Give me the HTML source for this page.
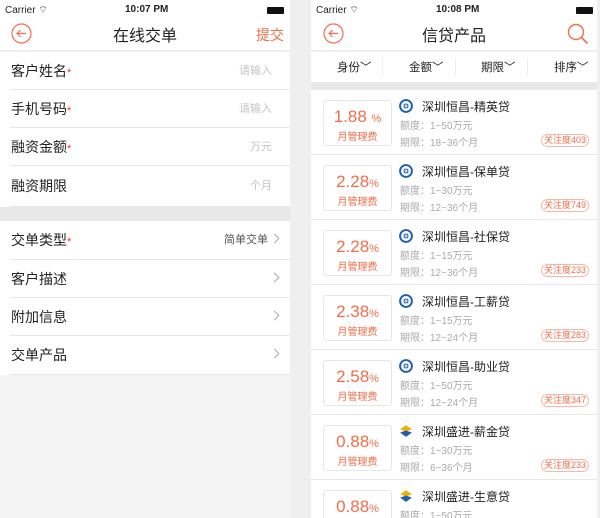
<!DOCTYPE html>
<html><head><meta charset="utf-8"><style>
*{margin:0;padding:0;box-sizing:border-box}
body{width:600px;height:518px;background:#efefef;font-family:"Liberation Sans","Noto Sans CJK SC",sans-serif;position:relative;overflow:hidden}
.s{position:absolute;top:0;height:518px;overflow:hidden}
#L{left:0;width:290px;background:#f4f4f4}
#R{left:311px;width:286px;background:#f4f4f4}
.sb{height:20px;font-size:10px;color:#222;position:relative}
.nav{height:30px;position:relative;background:#fff}
.top{background:#fff}
.title{position:absolute;left:0;right:0;top:2px;text-align:center;font-size:16px;color:#222}
.row{height:38px;background:#fff;position:relative;font-size:14px;color:#222;padding-left:11px;line-height:38px}
.row:after{content:"";position:absolute;left:10px;right:0;bottom:0;border-bottom:1px solid #e6e6e6}
.row .r{position:absolute;right:18px;top:0;font-size:11px;color:#c4c4c4}
.star{color:#e33;font-size:11px}
.chev{position:absolute;right:12px;top:14px;width:7px;height:7px;border-right:1px solid #aaa;border-top:1px solid #aaa;transform:rotate(45deg)}
.card{height:65px;background:#fff;position:relative;border-bottom:1px solid #e8e8e8}
.box{position:absolute;left:12px;top:10px;width:69px;height:46px;border:1px solid #e6e6e6;border-radius:3px;text-align:center;color:#f36d4a}
.box b{font-weight:normal;font-size:17px;display:block;margin-top:6px}
.box b span{font-size:11px}
.box i{font-style:normal;font-size:10px;display:block;margin-top:1px}
.nm{position:absolute;left:111px;top:8px;font-size:12px;color:#222}
.lg{position:absolute;left:88px;top:9px;width:14px;height:14px}
.l1,.l2{position:absolute;left:89px;font-size:10px;color:#aaa}
.l1{top:27px}.l2{top:44px}
.tag{position:absolute;right:8px;top:44px;font-size:9px;color:#f36d4a;border:1px solid #f5b8a6;border-radius:7px;padding:0 2px;line-height:11px}
</style></head><body>
<div class="s" id="L">
<div class="top">
<div class="sb"><span style="position:absolute;left:5px;top:4px">Carrier ︎⌔</span><span style="position:absolute;left:125px;top:4px;font-weight:bold">10:07 PM</span><span style="position:absolute;right:6px;top:7px;width:17px;height:7px;background:#111;border-radius:1px"></span></div>
<div class="nav"><svg style="position:absolute;left:11px;top:3px" width="21" height="21" viewBox="0 0 21 21"><circle cx="10.5" cy="10.5" r="9.5" fill="none" stroke="#f36d4a" stroke-width="1.2"/><path d="M15 10.5H6M9.5 7L6 10.5L9.5 14" fill="none" stroke="#f36d4a" stroke-width="1.2"/></svg><div class="title">在线交单</div><span style="position:absolute;right:6px;top:5px;font-size:14px;color:#f36d4a">提交</span></div>
</div>
<div style="height:2px;background:#eee"></div>
<div class="row">客户姓名<span class="star">*</span><span class="r">请输入</span></div>
<div class="row">手机号码<span class="star">*</span><span class="r">请输入</span></div>
<div class="row">融资金额<span class="star">*</span><span class="r">万元</span></div>
<div class="row" style="height:41px;line-height:40px">融资期限<span class="r">个月</span></div>
<div style="height:14px;background:#e8e8e8"></div>
<div class="row" style="height:39px;line-height:39px">交单类型<span class="star">*</span><span class="r" style="color:#555;right:22px">简单交单</span><i class="chev"></i></div>
<div class="row">客户描述<i class="chev"></i></div>
<div class="row">附加信息<i class="chev"></i></div>
<div class="row" style="height:39px">交单产品<i class="chev"></i></div>
</div>
<div class="s" id="R">
<div class="top">
<div class="sb"><span style="position:absolute;left:5px;top:4px">Carrier ︎⌔</span><span style="position:absolute;left:125px;top:4px;font-weight:bold">10:08 PM</span><span style="position:absolute;right:4px;top:7px;width:17px;height:7px;background:#111;border-radius:1px"></span></div>
<div class="nav"><svg style="position:absolute;left:12px;top:3px" width="21" height="21" viewBox="0 0 21 21"><circle cx="10.5" cy="10.5" r="9.5" fill="none" stroke="#f36d4a" stroke-width="1.2"/><path d="M15 10.5H6M9.5 7L6 10.5L9.5 14" fill="none" stroke="#f36d4a" stroke-width="1.2"/></svg><div class="title">信贷产品</div><svg style="position:absolute;right:8px;top:3px" width="22" height="22" viewBox="0 0 22 22"><circle cx="9" cy="9" r="7.5" fill="none" stroke="#f36d4a" stroke-width="1.4"/><path d="M14.5 14.5L20.5 20.5" stroke="#f36d4a" stroke-width="1.6"/></svg></div>
</div>
<div style="height:2px;background:#eee"></div>
<div style="height:30px;background:#fff;position:relative;font-size:11.5px;color:#222">
<span style="position:absolute;left:26px;top:7px">身份﹀</span><span style="position:absolute;left:98px;top:7px">金额﹀</span><span style="position:absolute;left:170px;top:7px">期限﹀</span><span style="position:absolute;left:243px;top:7px">排序﹀</span>
<i style="position:absolute;left:71px;top:6px;height:18px;border-left:1px solid #eee"></i><i style="position:absolute;left:144px;top:6px;height:18px;border-left:1px solid #eee"></i><i style="position:absolute;left:216px;top:6px;height:18px;border-left:1px solid #eee"></i>
</div>
<div style="height:8px;background:#e8e8e8"></div>
<div class="card"><div class="box"><b>1.88 <span>%</span></b><i>月管理费</i></div><svg class="lg" viewBox="0 0 13 13"><circle cx="6.5" cy="6.5" r="5.5" fill="none" stroke="#1f5fae" stroke-width="1.8"/><circle cx="6.5" cy="6.5" r="2.5" fill="#1f5fae"/><path d="M6.5 3v7M3 6.5h7" stroke="#fff" stroke-width=".8"/></svg><div class="nm">深圳恒昌-精英贷</div><div class="l1">额度：1~50万元</div><div class="l2">期限：18~36个月</div><span class="tag">关注度403</span></div>
<div class="card"><div class="box"><b>2.28<span>%</span></b><i>月管理费</i></div><svg class="lg" viewBox="0 0 13 13"><circle cx="6.5" cy="6.5" r="5.5" fill="none" stroke="#1f5fae" stroke-width="1.8"/><circle cx="6.5" cy="6.5" r="2.5" fill="#1f5fae"/><path d="M6.5 3v7M3 6.5h7" stroke="#fff" stroke-width=".8"/></svg><div class="nm">深圳恒昌-保单贷</div><div class="l1">额度：1~30万元</div><div class="l2">期限：12~36个月</div><span class="tag">关注度749</span></div>
<div class="card"><div class="box"><b>2.28<span>%</span></b><i>月管理费</i></div><svg class="lg" viewBox="0 0 13 13"><circle cx="6.5" cy="6.5" r="5.5" fill="none" stroke="#1f5fae" stroke-width="1.8"/><circle cx="6.5" cy="6.5" r="2.5" fill="#1f5fae"/><path d="M6.5 3v7M3 6.5h7" stroke="#fff" stroke-width=".8"/></svg><div class="nm">深圳恒昌-社保贷</div><div class="l1">额度：1~15万元</div><div class="l2">期限：12~36个月</div><span class="tag">关注度233</span></div>
<div class="card"><div class="box"><b>2.38<span>%</span></b><i>月管理费</i></div><svg class="lg" viewBox="0 0 13 13"><circle cx="6.5" cy="6.5" r="5.5" fill="none" stroke="#1f5fae" stroke-width="1.8"/><circle cx="6.5" cy="6.5" r="2.5" fill="#1f5fae"/><path d="M6.5 3v7M3 6.5h7" stroke="#fff" stroke-width=".8"/></svg><div class="nm">深圳恒昌-工薪贷</div><div class="l1">额度：1~15万元</div><div class="l2">期限：12~24个月</div><span class="tag">关注度283</span></div>
<div class="card"><div class="box"><b>2.58<span>%</span></b><i>月管理费</i></div><svg class="lg" viewBox="0 0 13 13"><circle cx="6.5" cy="6.5" r="5.5" fill="none" stroke="#1f5fae" stroke-width="1.8"/><circle cx="6.5" cy="6.5" r="2.5" fill="#1f5fae"/><path d="M6.5 3v7M3 6.5h7" stroke="#fff" stroke-width=".8"/></svg><div class="nm">深圳恒昌-助业贷</div><div class="l1">额度：1~50万元</div><div class="l2">期限：12~24个月</div><span class="tag">关注度347</span></div>
<div class="card"><div class="box"><b>0.88<span>%</span></b><i>月管理费</i></div><svg class="lg" viewBox="0 0 13 13"><path d="M1 5L6.5 1L12 5L6.5 7z" fill="#e9b400"/><path d="M1 8L6.5 6L12 8L6.5 12z" fill="#1f5fae"/></svg><div class="nm">深圳盛进-薪金贷</div><div class="l1">额度：1~30万元</div><div class="l2">期限：6~36个月</div><span class="tag">关注度233</span></div>
<div class="card"><div class="box"><b>0.88<span>%</span></b><i>月管理费</i></div><svg class="lg" viewBox="0 0 13 13"><path d="M1 5L6.5 1L12 5L6.5 7z" fill="#e9b400"/><path d="M1 8L6.5 6L12 8L6.5 12z" fill="#1f5fae"/></svg><div class="nm">深圳盛进-生意贷</div><div class="l1">额度：1~50万元</div></div>
</div>
</body></html>
